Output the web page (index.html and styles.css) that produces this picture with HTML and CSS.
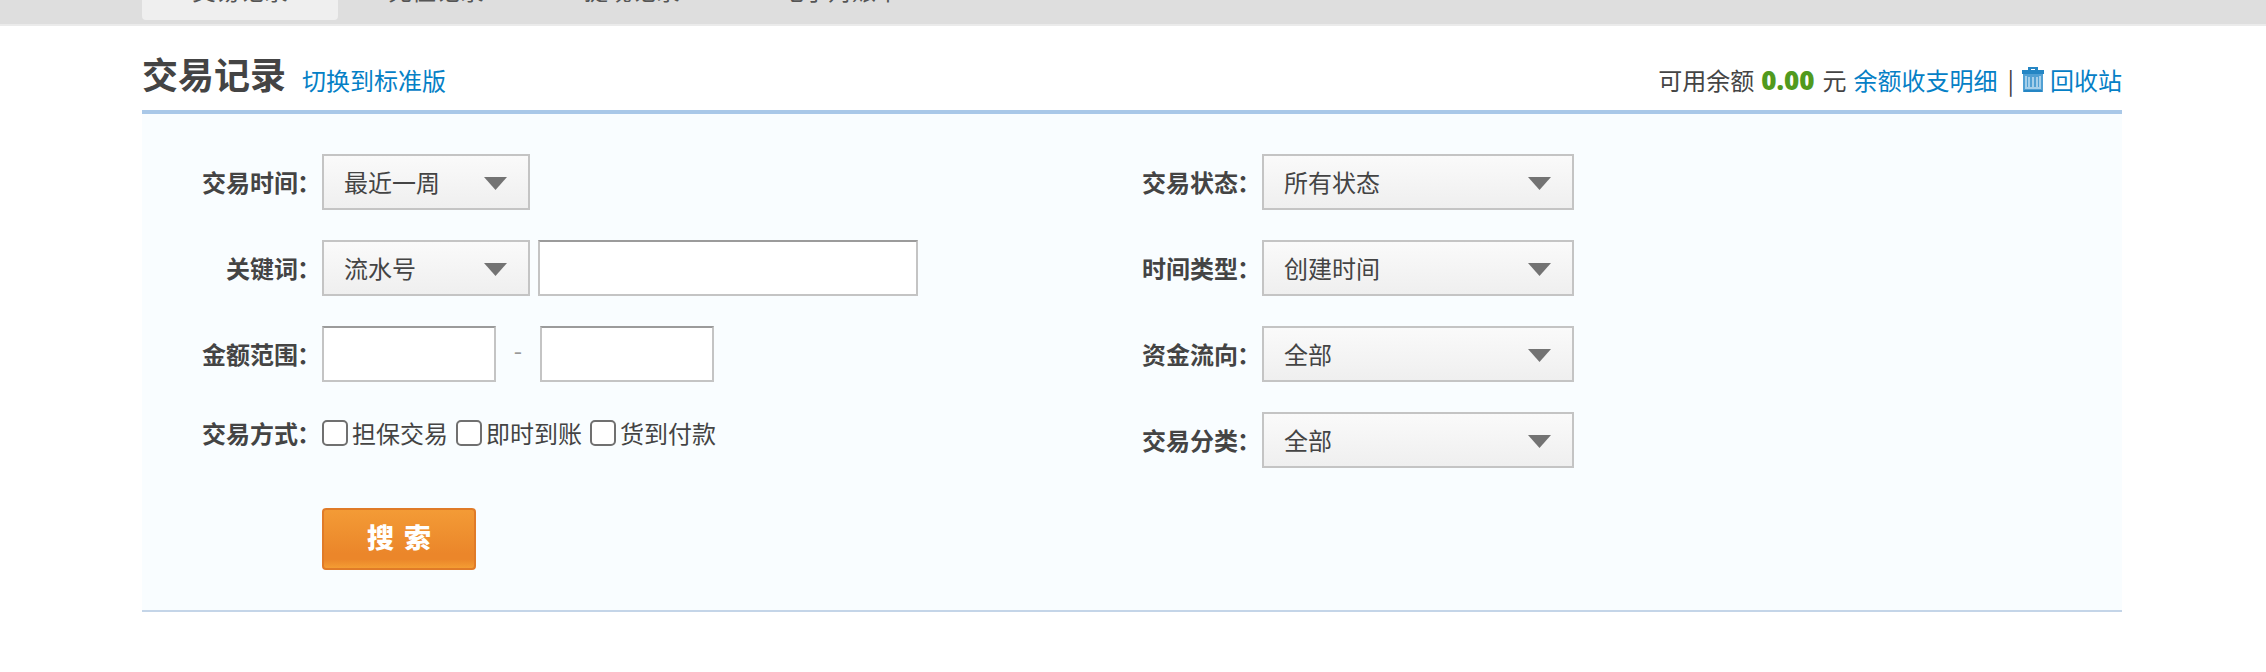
FILE: index.html
```html
<!DOCTYPE html>
<html lang="zh-CN">
<head>
<meta charset="utf-8">
<title>交易记录</title>
<link rel="stylesheet" href="styles.css">
</head>
<body>
<nav class="tabs">
  <a class="tab active">交易记录</a><a class="tab">充值记录</a><a class="tab">提现记录</a><a class="tab">电子对账单</a>
</nav>
<main class="page">
  <header class="head">
    <h1 class="title">交易记录</h1>
    <a class="link switch">切换到标准版</a>
    <div class="balance">
      <span>可用余额</span><strong class="amount">0.00</strong><span class="unit">元</span><a class="link">余额收支明细</a><span class="bar">|</span>
      <svg class="trash" width="22" height="26" viewBox="0 0 22 26"><path fill="#2586c4" fill-rule="evenodd" d="M6 0H16V3H22V7H0V3H6ZM9 2V3H13V2Z"/><path fill="#51a0d3" d="M1 7H21V25H1Z"/><path fill="#2586c4" d="M2 23H20V25H2Z"/><path stroke="#a5cfea" stroke-width="2" fill="none" d="M7 10V20M11 10V20M15 10V20M4 9V21H18V9"/></svg>
      <a class="link">回收站</a>
    </div>
  </header>
  <form class="panel">
    <div class="col">
      <div class="row"><label class="label">交易时间<span class="colon">：</span></label><div class="select"><span>最近一周</span><i class="arrow"></i></div></div>
      <div class="row"><label class="label">关键词<span class="colon">：</span></label><div class="select"><span>流水号</span><i class="arrow"></i></div><input class="input keyword" type="text"></div>
      <div class="row"><label class="label">金额范围<span class="colon">：</span></label><input class="input" type="text"><span class="dash">-</span><input class="input" type="text"></div>
      <div class="row checks"><span class="label">交易方式<span class="colon">：</span></span><label class="check"><input class="box" type="checkbox">担保交易</label><label class="check"><input class="box" type="checkbox">即时到账</label><label class="check"><input class="box" type="checkbox">货到付款</label></div>
      <button class="search" type="button">搜 索</button>
    </div>
    <div class="col wide">
      <div class="row"><label class="label">交易状态<span class="colon">：</span></label><div class="select"><span>所有状态</span><i class="arrow"></i></div></div>
      <div class="row"><label class="label">时间类型<span class="colon">：</span></label><div class="select"><span>创建时间</span><i class="arrow"></i></div></div>
      <div class="row"><label class="label">资金流向<span class="colon">：</span></label><div class="select"><span>全部</span><i class="arrow"></i></div></div>
      <div class="row"><label class="label">交易分类<span class="colon">：</span></label><div class="select"><span>全部</span><i class="arrow"></i></div></div>
    </div>
  </form>
</main>
</body>
</html>
```
FILE: styles.css
```css
* { box-sizing: border-box; }
body {
  margin: 0;
  height: 672px;
  overflow: hidden;
  background: #fff;
  color: #444;
  font: 24px/36px "Noto Sans CJK SC", sans-serif;
}
.tabs {
  display: flex;
  height: 26px;
  padding-left: 142px;
  background: #dedede;
  border-bottom: 2px solid #ebebeb;
}
.tab {
  height: 30px;
  margin-top: -10px;
  padding: 0 50px;
  line-height: 0;
  color: #555;
  white-space: nowrap;
}
.tab.active { background: #efefef; border-radius: 0 0 4px 4px; }
.page { width: 1980px; margin: 0 0 0 142px; }
.head {
  display: flex;
  align-items: flex-start;
  height: 88px;
  padding-top: 21px;
  border-bottom: 4px solid #a9c8e8;
  white-space: nowrap;
}
.title { margin: 0 16px 0 0; font-size: 36px; line-height: 52px; font-weight: 700; }
.switch { margin-top: 15px; }
.link { color: #0580c6; }
.balance { display: flex; align-items: baseline; margin: 15px 0 0 auto; }
.amount { margin: 0 8px 0 7px; color: #519a1e; font: 900 26px/36px "Noto Sans", "Open Sans", sans-serif; }
.unit { margin-right: 7px; }
.bar { margin: 0 8px 0 10px; }
.trash { align-self: center; margin-right: 6px; }
.panel {
  display: flex;
  height: 498px;
  padding-top: 40px;
  background: #f9fdff;
  border-bottom: 2px solid #c4d5e8;
}
.col { width: 940px; }
.row { display: flex; align-items: center; height: 56px; margin-bottom: 30px; }
.label { width: 180px; text-align: right; font-weight: 700; }
.colon { margin: 0 1px 0 -1px; }
.select {
  display: flex;
  align-items: center;
  justify-content: space-between;
  width: 208px;
  height: 56px;
  padding: 0 21px 0 20px;
  border: 2px solid #c4c4c4;
  background: linear-gradient(#fafafa, #efefef);
}
.wide .select { width: 312px; }
.arrow { width: 23px; height: 13px; margin-top: 3px; background: #737373; clip-path: polygon(0 0, 100% 0, 50% 100%); }
.input {
  width: 174px;
  height: 56px;
  border: 2px solid #c4c4c4;
  border-top-color: #9b9b9b;
  border-radius: 0;
  background: #fff;
}
.keyword { width: 380px; margin-left: 8px; }
.dash { width: 44px; padding-bottom: 8px; text-align: center; color: #999; }
.checks { height: 42px; margin-bottom: 54px; }
.check { display: flex; align-items: center; margin-right: 8px; }
.box {
  appearance: none;
  width: 26px;
  height: 26px;
  margin: 0 4px 0 0;
  border: 2px solid #707070;
  border-radius: 5px;
  background: #fff;
}
.search {
  display: block;
  width: 154px;
  height: 62px;
  margin-left: 180px;
  padding: 0 0 4px;
  border: 2px solid #e07b28;
  border-radius: 4px;
  background: linear-gradient(#f39b36, #eb862a 75%, #eb862a 85%, #f49d33);
  color: #fff;
  font: 900 27px/54px "Noto Sans CJK SC", sans-serif;
  word-spacing: 4px;
}
```
